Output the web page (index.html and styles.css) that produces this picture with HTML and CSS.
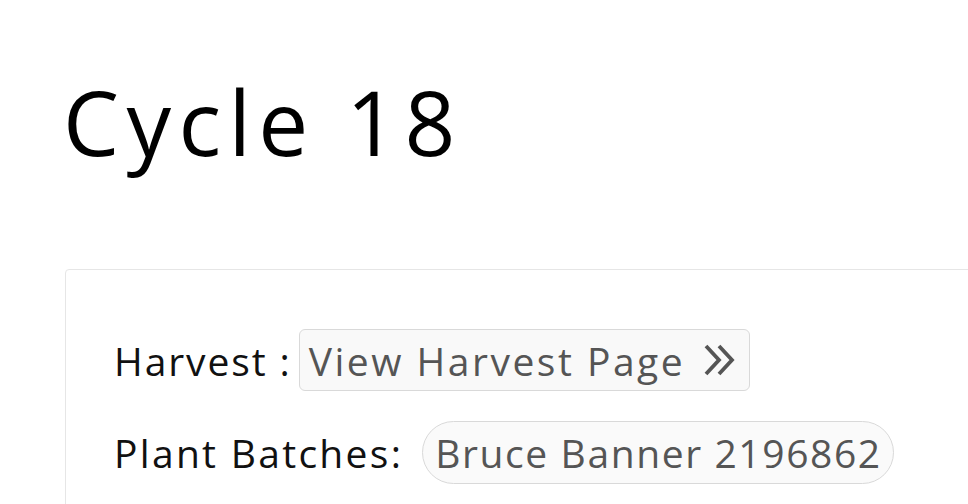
FILE: index.html
```html
<!DOCTYPE html>
<html lang="en">
<head>
<meta charset="utf-8">
<title>Cycle 18</title>
<link rel="stylesheet" href="styles.css">
</head>
<body>
<main class="page">
  <h1 class="title">Cycle 18</h1>
  <section class="card">
    <div class="row">
      <span class="label label-harvest">Harvest :</span>
      <a class="btn" href="#">
        <span class="btn-text">View Harvest Page</span>
        <svg class="chev" width="32" height="34" viewBox="0 0 32 34" aria-hidden="true">
          <path d="M3 3 L16 17 L3 31" fill="none" stroke="#555" stroke-width="3.8" stroke-linejoin="miter"/>
          <path d="M16 3 L29 17 L16 31" fill="none" stroke="#555" stroke-width="3.8" stroke-linejoin="miter"/>
        </svg>
      </a>
    </div>
    <div class="row">
      <span class="label label-batches">Plant Batches:</span>
      <span class="pill">Bruce Banner 2196862</span>
    </div>
  </section>
</main>
</body>
</html>
```

FILE: styles.css
```css
html, body {
  margin: 0;
  padding: 0;
  background: #ffffff;
  overflow: hidden;
}

.page {
  padding: 62px 0 0 65px;
  font-family: "Open Sans", "Noto Sans", sans-serif;
  color: #111111;
}

.title {
  margin: 0 0 0 -2px;
  font-size: 89px;
  font-weight: 400;
  line-height: 120px;
  letter-spacing: 7.4px;
  color: #000000;
}

.card {
  margin-top: 87px;
  width: 1000px;
  border: 1px solid #e6e6e6;
  border-radius: 4px;
  padding: 59px 48px 40px;
}

.row {
  display: flex;
  align-items: center;
}

.row + .row {
  margin-top: 30px;
}

.label {
  font-size: 39px;
  line-height: 1;
  letter-spacing: 1.9px;
  color: #111111;
}

.label-batches {
  letter-spacing: 2.3px;
  margin-right: 19px;
}

.label-harvest {
  margin-right: 7px;
}

.btn {
  display: flex;
  align-items: center;
  gap: 18px;
  height: 60px;
  padding: 0 14px 0 9px;
  border: 1px solid #d9d9d9;
  border-radius: 6px;
  background: #f9f9f9;
  color: #555555;
  font-size: 39px;
  letter-spacing: 2.5px;
  text-decoration: none;
}

.chev {
  display: block;
}

.pill {
  display: flex;
  align-items: center;
  height: 61px;
  padding: 0 11px 0 12px;
  border: 1px solid #d9d9d9;
  border-radius: 32px;
  background: #fafafa;
  color: #555555;
  font-size: 39px;
  letter-spacing: 1.6px;
}
```
